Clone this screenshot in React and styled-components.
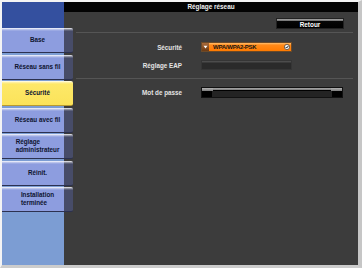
import React from 'react';
import styled, { createGlobalStyle } from 'styled-components';

const GlobalStyle = createGlobalStyle`
  html, body {
    margin: 0;
    padding: 0;
    background: #cfcfcf;
  }
  * {
    box-sizing: border-box;
  }
`;

const Frame = styled.div`
  width: 362px;
  height: 268px;
  display: flex;
  border-style: solid;
  border-width: 2px 4px 3px 2px;
  border-color: #f4f4f4 #c6c6c6 #cccccc #f4f4f4;
  font-family: 'Liberation Sans', Arial, sans-serif;
  font-weight: bold;
  overflow: hidden;
`;

const Sidebar = styled.div`
  width: 62px;
  flex-shrink: 0;
  display: flex;
  flex-direction: column;
  background: #7c9dd3;
  position: relative;
  z-index: 1;
`;

const TopBand = styled.div`
  height: 26px;
  background: #34509f;
`;

const Menu = styled.div`
  display: flex;
  flex-direction: column;
  gap: 1.5px;
`;

const MenuButton = styled.div`
  width: 71px;
  height: 25px;
  display: flex;
  align-items: center;
  justify-content: center;
  border-radius: 0 2px 2px 0;
  border-bottom: 1px solid ${(p) => (p.$active ? '#b89a30' : '#2c3150')};
  color: #0e1430;
  font-size: 6.3px;
  line-height: 8px;
  background: ${(p) =>
    p.$active
      ? 'linear-gradient(to bottom, #ffffff 0, #fff4b0 1px, #fde868 3px, #fbe35a 100%)'
      : 'linear-gradient(to bottom, rgba(255,255,255,0.95) 0, rgba(255,255,255,0.4) 1.5px, rgba(255,255,255,0) 3px), linear-gradient(to right, #8d9ddf 0, #8d9ddf 62px, #474c68 62px)'};
`;

const MenuText = styled.span`
  display: inline-block;
  text-align: left;
  white-space: nowrap;
`;

const Main = styled.div`
  flex: 1;
  display: flex;
  flex-direction: column;
  background: #3c3c3c;
`;

const Header = styled.div`
  height: 10px;
  background: #030303;
  color: #f0f0f0;
  font-size: 6.4px;
  line-height: 10px;
  text-align: center;
`;

const Toolbar = styled.div`
  display: flex;
  justify-content: flex-end;
  padding: 6px 14px 0 0;
`;

const BackButton = styled.div`
  width: 68px;
  height: 11px;
  background: linear-gradient(to bottom, #a8a8a8 0, #6a6a6a 2px, #050505 2.5px, #000 100%);
  border: 1px solid #222;
  color: #ffffff;
  font-size: 6.4px;
  line-height: 11px;
  text-align: center;
`;

const Divider = styled.div`
  height: 1px;
  background: #555555;
  margin: ${(p) => p.$margin};
`;

const Form = styled.div`
  display: grid;
  grid-template-columns: 118px 1fr;
  column-gap: 19px;
  row-gap: 8px;
  align-items: center;
`;

const Label = styled.div`
  text-align: right;
  color: #e4e4e4;
  font-size: 6.3px;
`;

const Select = styled.div`
  width: 91px;
  height: 10px;
  display: flex;
  align-items: stretch;
  border: 1px solid #6a4a2a;
  background: linear-gradient(to bottom, #ffc070 0, #ff8a1a 2px, #ff7a00 100%);
`;

const SelectArrow = styled.div`
  width: 7px;
  background: linear-gradient(to bottom, #a86a3a, #6a3a14);
  display: flex;
  align-items: center;
  justify-content: center;
`;

const SelectValue = styled.div`
  flex: 1;
  color: #141414;
  font-size: 6px;
  line-height: 8px;
  letter-spacing: -0.25px;
  padding-left: 4px;
`;

const SelectIcon = styled.div`
  width: 8px;
  display: flex;
  align-items: center;
  justify-content: center;
`;

const EmptyField = styled.div`
  width: 91px;
  height: 10px;
  background: linear-gradient(to bottom, #4e4e4e 0, #4a4a4a 1px, #2a2a2a 2px, #2a2a2a 100%);
  border: 1px solid #353535;
`;

const PasswordField = styled.div`
  width: 142px;
  height: 11px;
  background:
    linear-gradient(to bottom, #b4b4b4 0, #7a7a7a 3px, rgba(0,0,0,0) 3px) left top / 11px 100% no-repeat,
    linear-gradient(to bottom, #b4b4b4 0, #7a7a7a 3px, rgba(0,0,0,0) 3px) right top / 11px 100% no-repeat,
    linear-gradient(to bottom, #a8a8a8 0, #7a7a7a 2px, #000 2px, #000 3px, #232323 3px) center top / 100% 100% no-repeat;
  background-color: #000;
  border: 1px solid #111;
  position: relative;
  &::before,
  &::after {
    content: '';
    position: absolute;
    top: 3px;
    bottom: 0;
    width: 10px;
    background: #000;
  }
  &::before {
    left: 0;
  }
  &::after {
    right: 0;
  }
`;

const menu = [
  { label: 'Base' },
  { label: 'Réseau sans fil' },
  { label: 'Sécurité', active: true },
  { label: 'Réseau avec fil' },
  { label: ['Réglage', 'administrateur'] },
  { label: 'Réinit.' },
  { label: ['Installation', 'terminée'] },
];

function App() {
  return (
    <>
      <GlobalStyle />
      <Frame>
        <Sidebar>
          <TopBand />
          <Menu>
            {menu.map((item, i) => (
              <MenuButton key={i} $active={item.active}>
                <MenuText>
                  {Array.isArray(item.label)
                    ? item.label.map((l, j) => (
                        <React.Fragment key={j}>
                          {l}
                          {j === 0 && <br />}
                        </React.Fragment>
                      ))
                    : item.label}
                </MenuText>
              </MenuButton>
            ))}
          </Menu>
        </Sidebar>
        <Main>
          <Header>Réglage réseau</Header>
          <Toolbar>
            <BackButton>Retour</BackButton>
          </Toolbar>
          <Divider $margin="3px 5px 9px 12px" />
          <Form>
            <Label>Sécurité</Label>
            <Select>
              <SelectArrow>
                <svg width="5" height="4" viewBox="0 0 5 4">
                  <path d="M0.5 0.8 L4.5 0.8 L2.5 3.4 Z" fill="#fff" />
                </svg>
              </SelectArrow>
              <SelectValue>WPA/WPA2-PSK</SelectValue>
              <SelectIcon>
                <svg width="6" height="6" viewBox="0 0 6 6">
                  <circle cx="3" cy="3" r="2.6" fill="#f4f4f4" stroke="#222" strokeWidth="0.6" />
                  <path d="M1.7 3 L2.7 4 L4.4 1.9" fill="none" stroke="#111" strokeWidth="0.9" />
                </svg>
              </SelectIcon>
            </Select>
            <Label>Réglage EAP</Label>
            <EmptyField />
          </Form>
          <Divider $margin="8px 5px 8px 12px" />
          <Form>
            <Label>Mot de passe</Label>
            <PasswordField />
          </Form>
        </Main>
      </Frame>
    </>
  );
}

export default App;
